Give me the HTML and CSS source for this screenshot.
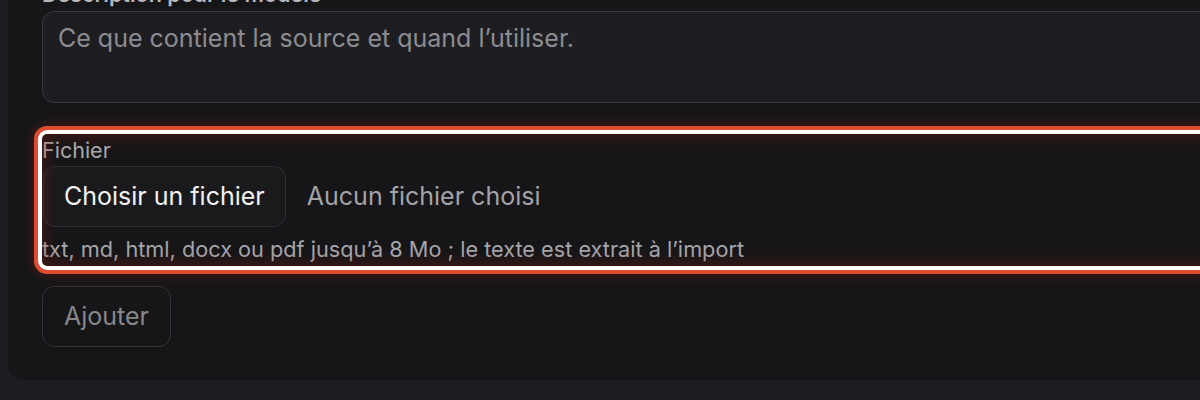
FILE: index.html
```html
<!DOCTYPE html>
<html lang="fr">
<head>
<meta charset="utf-8">
<title>Ajouter une source</title>
<link rel="stylesheet" href="styles.css">
</head>
<body>
<div class="card">
  <div class="field">
    <label class="label label-strong">Description pour le modèle</label>
    <div class="textarea"><span class="placeholder">Ce que contient la source et quand l’utiliser.</span></div>
  </div>
  <div class="field field-file">
    <label class="label">Fichier</label>
    <div class="file-row">
      <span class="file-btn">Choisir un fichier</span>
      <span class="file-none">Aucun fichier choisi</span>
    </div>
    <p class="hint">txt, md, html, docx ou pdf jusqu’à 8 Mo ; le texte est extrait à l’import</p>
  </div>
  <div class="actions">
    <button class="btn" disabled>Ajouter</button>
  </div>
</div>
</body>
</html>
```

FILE: styles.css
```css
html, body {
  margin: 0;
  padding: 0;
  background: #1c1c21;
  overflow: hidden;
  height: 400px;
  font-family: Inter, "Noto Sans", "Liberation Sans", sans-serif;
}

.card {
  margin: -40px 0 0 8px;
  width: 1400px;
  background: #161618;
  border-radius: 0 0 0 16px;
  padding: 22px 0 33px 34px;
  box-sizing: border-box;
}

.field {
  display: flex;
  flex-direction: column;
  width: 1300px;
}

.label {
  font-size: 21.5px;
  line-height: 24px;
  color: #a9a9ad;
  font-weight: 400;
}

.label-strong {
  font-weight: 600;
  color: #b8b8bc;
  margin-bottom: 5px;
}

.textarea {
  height: 92px;
  box-sizing: border-box;
  background: #1e1e22;
  border: 1px solid #38383d;
  border-radius: 12px;
  padding: 12px 15px;
}

.placeholder {
  font-size: 25px;
  line-height: 28px;
  color: #8c8c91;
}

.field-file {
  position: relative;
  margin-top: 35px;
}

.field-file::after {
  content: "";
  position: absolute;
  left: -4px;
  top: -8px;
  right: 0;
  bottom: -9px;
  border: 4px solid #ffffff;
  border-radius: 9px;
  box-shadow: 0 0 0 4px #e14b30, 0 0 12px 6px rgba(180, 40, 20, 0.25), inset 0 0 14px 4px rgba(150, 35, 20, 0.32);
  pointer-events: none;
}

.file-row {
  display: flex;
  align-items: center;
  gap: 21px;
  margin-top: 4px;
}

.file-btn {
  font-size: 25px;
  line-height: 29px;
  color: #f2f2f3;
  background: #1a1a1d;
  border: 1px solid #2f2f34;
  border-radius: 12px;
  padding: 15px 20px;
  margin-left: 1px;
}

.file-none {
  font-size: 25px;
  line-height: 29px;
  color: #a3a3a8;
}

.hint {
  margin: 10px 0 0;
  font-size: 21.7px;
  line-height: 24px;
  color: #a6a6ab;
}

.actions {
  margin-top: 25px;
  display: flex;
}

.btn {
  font-family: inherit;
  font-size: 25px;
  line-height: 29px;
  color: #86868b;
  background: transparent;
  border: 1px solid #333338;
  border-radius: 12px;
  padding: 15px 21px;
}
```
